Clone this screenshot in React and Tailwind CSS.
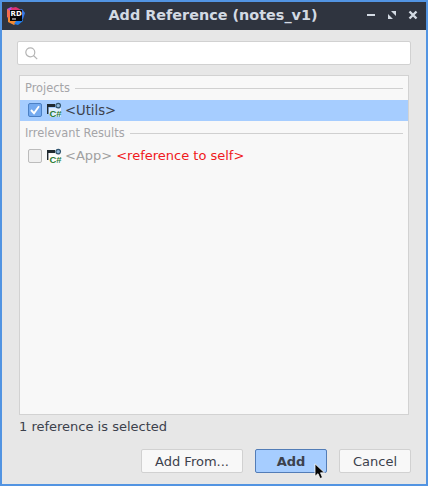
import React from 'react';

function RiderLogo() {
  return (
    <svg className="-ml-px overflow-visible" width="20" height="20" viewBox="0 0 20 20" aria-hidden="true">
      <path d="M1 3 5 1l6 3-5 9-4 1z" fill="#b84edb" />
      <path d="M1 3 6 6 4 13 1 11z" fill="#f26c4f" />
      <path d="M5 2 10 1 17 5 13 9 6 6z" fill="#dd326f" />
      <path d="m13 4 3-1 3 4-2 6-4 1z" fill="#3477e5" />
      <path d="m2 12 3-2 7 6-4 3-6-3z" fill="#f58a31" />
      <path d="m10 15 6-3 1 3-5 4-4-1z" fill="#237ee9" />
      <path d="M4 4h12v11H4z" fill="#050508" />
      <text x="4.6" y="10" fontSize="7" fontWeight="bold" fontFamily="DejaVu Sans, sans-serif" fill="#fff">RD</text>
      <path d="M6 12.5h4v1H6z" fill="#fff" />
    </svg>
  );
}

function ProjectIcon() {
  return (
    <svg className="ml-[5px] shrink-0 overflow-visible" width="16" height="18" viewBox="0 0 16 18" aria-hidden="true">
      <path d="M0 3h8v3H1.4v7H0z" fill="#202a30" />
      <path d="M2 7h12v9H3v-3H2z" fill="#fff" fillOpacity=".65" />
      <circle cx="11.2" cy="4.6" r="2.3" fill="#91b9dc" stroke="#31556f" strokeWidth="1.2" />
      <text x="2.5" y="16" fontSize="9.5" fontWeight="bold" fontFamily="Liberation Sans, sans-serif" fill="#287b35">C#</text>
    </svg>
  );
}

function Checkbox({ checked }) {
  return (
    <span className={`flex h-[14px] w-[14px] shrink-0 items-center justify-center rounded-[2px] border ${checked ? 'border-[#4b80c5] bg-[#74aaf0]' : 'border-[#bcbcbc] bg-[#f0f0f0]'}`}>
      {checked && (
        <svg width="12" height="12" viewBox="0 0 12 12" aria-hidden="true">
          <path d="m2 6 3 3.2 5-7" fill="none" stroke="white" strokeWidth="1.9" />
        </svg>
      )}
    </span>
  );
}

function Group({ title }) {
  return (
    <div className="flex h-[22px] items-center gap-[5px] pr-[5px] pl-[5px] text-[11.4px] text-[#a5a5a8]">
      <span>{title}</span>
      <span className="mb-[2px] h-px flex-1 bg-[#d0d0d0]" />
    </div>
  );
}

export default function App() {
  return (
    <div className="flex h-[486px] w-[428px] flex-col overflow-hidden border-2 border-[#5294e2] bg-[#e7e7e7] font-['DejaVu_Sans',sans-serif] text-[13px] text-[#3c414c]">
      <header className="flex h-7 shrink-0 items-center bg-[#2f343f] pr-[6px] pl-[5px]">
        <RiderLogo />
        <h1 className="flex-1 pb-[2px] pl-[34px] text-center text-[14.4px] leading-[26px] font-bold whitespace-nowrap text-[#d3dae3]">Add Reference (notes_v1)</h1>
        <div className="flex shrink-0 items-center pb-[2px] text-[#d3dae3]">
          <svg width="54" height="12" viewBox="0 0 54 12" aria-label="Window controls">
            <path d="M1 5h8v2H1z" fill="currentColor" />
            <path d="M25 2h5v5zM22 5v5h5z" fill="currentColor" />
            <path d="m43.5 2.5 7 7m0-7-7 7" stroke="currentColor" strokeWidth="2.4" />
          </svg>
        </div>
      </header>
      <main className="flex min-h-0 flex-1 flex-col px-[15px] pt-[11px]">
        <div className="flex h-6 w-[394px] shrink-0 items-center rounded-[2px] border border-[#d1d1d1] bg-white pl-[7px]">
          <svg width="13" height="13" viewBox="0 0 13 13" fill="none" stroke="#b4b4b4" strokeWidth="1.2" aria-hidden="true">
            <circle cx="5.3" cy="5.3" r="4.5" />
            <path d="m8.5 8.5 3.7 3.7" />
          </svg>
          <input aria-label="Search references" className="min-w-0 flex-1 bg-transparent outline-none" />
        </div>
        <section className="mt-[10px] ml-[2px] h-[340px] w-[390px] shrink-0 border border-[#d2d2d2] bg-[#f8f8f8] pt-[2px]">
          <Group title="Projects" />
          <div className="flex h-[21px] items-center bg-[#a6cdff] pb-px pl-2">
            <Checkbox checked />
            <ProjectIcon />
            <span className="ml-[2px] pt-[2px] text-[13.2px]">&lt;Utils&gt;</span>
          </div>
          <div className="pt-[2px]">
            <Group title="Irrelevant Results" />
          </div>
          <div className="flex h-[22px] items-center pl-2">
            <Checkbox />
            <ProjectIcon />
            <span className="ml-[2px] text-[#a0a0a0]">&lt;App&gt;</span>
            <span className="ml-1 text-[#f01820]">&lt;reference to self&gt;</span>
          </div>
        </section>
        <p className="mt-[2px] ml-[2px] h-5 leading-5">1 reference is selected</p>
        <footer className="mt-3 flex w-[394px] justify-end gap-3">
          <button className="h-6 w-[102px] rounded-[2px] border border-[#d1d1d1] bg-[#f8f8f8] pt-px leading-[22px]">Add From...</button>
          <button className="relative h-6 w-[72px] rounded-[2px] border border-[#537db7] bg-[#a6cdff] pt-px leading-[22px] font-bold">
            Add
            <svg className="absolute top-[13px] left-[58px]" width="12" height="17" viewBox="0 0 12 17" aria-hidden="true">
              <path d="M1 .8v12.5l3-2.6 2 4.8 2.5-1-2-4.7h4z" fill="#050505" stroke="#fff" strokeWidth=".8" />
            </svg>
          </button>
          <button className="h-6 w-[72px] rounded-[2px] border border-[#d1d1d1] bg-[#f8f8f8] pt-px leading-[22px]">Cancel</button>
        </footer>
      </main>
    </div>
  );
}
